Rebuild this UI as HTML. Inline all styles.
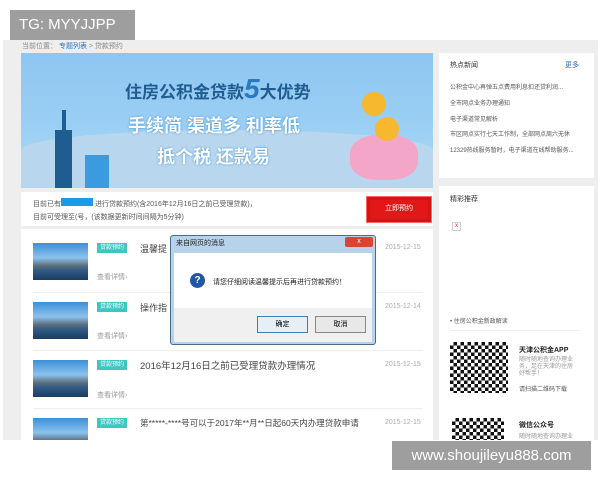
<!DOCTYPE html>
<html><head><meta charset="utf-8"><style>
*{margin:0;padding:0;box-sizing:border-box}
body{width:600px;height:480px;background:#fff;font-family:"Liberation Sans","Noto Sans CJK SC",sans-serif;position:relative;overflow:hidden}
.a{position:absolute}
.page{left:3px;top:40px;width:595px;height:400px;background:#eeeeee}
.w{background:#fff}
.t{font-size:7px;color:#555;white-space:nowrap}
.thumb{width:55px;height:37px;background:linear-gradient(#3d8fd8 0,#8cc2ec 40%,#5a6c7a 62%,#2f5a86 75%,#1b3c60 100%)}
.tag{background:#3cc7c0;color:#fff;font-size:6px;padding:1px 3px;height:10px;line-height:8px}
.qr{background:repeating-conic-gradient(#111 0 25%,#fff 0 50%) 0 0/7px 7px}
</style></head><body>
<div class="a page"></div>
<div class="a" style="left:10px;top:10px;width:125px;height:30px;background:#9e9e9e;color:#fff;font-size:15px;line-height:30px;padding-left:9px">TG: MYYJJPP</div>
<div class="a t" style="left:22px;top:41px;color:#888">当前位置： <span style="color:#2a6fc0">专题列表</span> &gt; 贷款预约</div>
<div class="a" style="left:21px;top:53px;width:412px;height:135px;background:linear-gradient(#8ec6f2,#9cd0f4 60%,#b9dcf4)"></div>
<div class="a" style="left:21px;top:130px;width:412px;height:58px;background:#b8d7ee;border-radius:50% 50% 0 0/20px 20px 0 0"></div>
<div class="a" style="left:55px;top:130px;width:17px;height:58px;background:#1f5d90"></div>
<div class="a" style="left:62px;top:110px;width:4px;height:22px;background:#1f5d90"></div>
<div class="a" style="left:85px;top:155px;width:24px;height:33px;background:#3a9be0"></div>
<div class="a" style="left:125px;top:73px;font-size:17px;color:#1f5d90;font-weight:bold;white-space:nowrap">住房公积金贷款<span style="font-size:28px;color:#2a7ac0;font-style:italic">5</span>大优势</div>
<div class="a" style="left:128px;top:112px;font-size:18px;color:#fff;font-weight:bold;white-space:nowrap;text-shadow:0 0 2px #3a8ad0">手续简 渠道多 利率低</div>
<div class="a" style="left:157px;top:143px;font-size:18px;color:#fff;font-weight:bold;white-space:nowrap;text-shadow:0 0 2px #3a8ad0">抵个税 还款易</div>
<div class="a" style="left:350px;top:135px;width:68px;height:45px;background:#f4a6c8;border-radius:40%"></div>
<div class="a" style="left:362px;top:92px;width:24px;height:24px;background:#f5b82e;border-radius:50%"></div>
<div class="a" style="left:375px;top:117px;width:24px;height:24px;background:#f5b82e;border-radius:50%"></div>

<div class="a w" style="left:21px;top:192px;width:412px;height:34px"></div>
<div class="a t" style="left:33px;top:198px">目前已有<span style="background:#1a9be8;display:inline-block;width:32px;height:8px"></span> 进行贷款预约(含2016年12月16日之前已受理贷款)，</div>
<div class="a t" style="left:33px;top:212px">目前可受理至(号，(该数据更新时间间隔为5分钟)</div>
<div class="a" style="left:367px;top:197px;width:64px;height:25px;background:#e21818;border:3px solid #d61212;outline:1px solid #f66;color:#fff;font-size:7px;text-align:center;line-height:18px">立即预约</div>

<div class="a w" style="left:21px;top:229px;width:412px;height:211px"></div>
<div class="a thumb" style="left:33px;top:243px"></div>
<div class="a thumb" style="left:33px;top:302px"></div>
<div class="a thumb" style="left:33px;top:360px"></div>
<div class="a thumb" style="left:33px;top:418px"></div>
<div class="a tag" style="left:97px;top:243px">贷款预约</div>
<div class="a tag" style="left:97px;top:302px">贷款预约</div>
<div class="a tag" style="left:97px;top:360px">贷款预约</div>
<div class="a tag" style="left:97px;top:418px">贷款预约</div>
<div class="a" style="left:140px;top:242px;font-size:9px;color:#444">温馨提</div>
<div class="a" style="left:140px;top:301px;font-size:9px;color:#444">操作指</div>
<div class="a" style="left:140px;top:358px;font-size:9.5px;color:#444;white-space:nowrap">2016年12月16日之前已受理贷款办理情况</div>
<div class="a" style="left:140px;top:417px;font-size:8.5px;color:#444;white-space:nowrap">第*****-****号可以于2017年**月**日起60天内办理贷款申请</div>
<div class="a t" style="left:97px;top:272px;color:#999">查看详情›</div>
<div class="a t" style="left:97px;top:331px;color:#999">查看详情›</div>
<div class="a t" style="left:97px;top:390px;color:#999">查看详情›</div>
<div class="a t" style="left:385px;top:244px;color:#aaa">2015-12-15</div>
<div class="a t" style="left:385px;top:303px;color:#aaa">2015-12-14</div>
<div class="a t" style="left:385px;top:361px;color:#aaa">2015-12-15</div>
<div class="a t" style="left:385px;top:419px;color:#aaa">2015-12-15</div>
<div class="a" style="left:33px;top:292px;width:390px;height:1px;background:#eee"></div>
<div class="a" style="left:33px;top:350px;width:390px;height:1px;background:#eee"></div>
<div class="a" style="left:33px;top:408px;width:390px;height:1px;background:#eee"></div>

<div class="a" style="left:170px;top:235px;width:206px;height:110px;background:#b7d3ec;border:1px solid #4a6a8a;border-radius:3px"></div>
<div class="a t" style="left:176px;top:238px;color:#222">来自网页的消息</div>
<div class="a" style="left:345px;top:237px;width:28px;height:10px;background:#d9452f;border-radius:2px;color:#fff;font-size:7px;text-align:center;line-height:9px">x</div>
<div class="a" style="left:174px;top:253px;width:198px;height:55px;background:#fff"></div>
<div class="a" style="left:174px;top:308px;width:198px;height:34px;background:#f0f0f0"></div>
<div class="a" style="left:190px;top:273px;width:15px;height:15px;border-radius:50%;background:#2456a8;color:#fff;font-size:10px;font-weight:bold;text-align:center;line-height:15px">?</div>
<div class="a t" style="left:213px;top:277px;color:#222">请您仔细阅读温馨提示后再进行贷款预约！</div>
<div class="a" style="left:257px;top:316px;width:51px;height:17px;background:#e6eef6;border:1px solid #3c7fb1;font-size:7px;text-align:center;line-height:15px">确定</div>
<div class="a" style="left:315px;top:316px;width:51px;height:17px;background:#e8e8e8;border:1px solid #888;font-size:7px;text-align:center;line-height:15px">取消</div>

<div class="a w" style="left:439px;top:53px;width:155px;height:125px"></div>
<div class="a t" style="left:450px;top:60px;color:#333">热点新闻</div>
<div class="a t" style="left:565px;top:60px;color:#2a6fc0">更多</div>
<div class="a t" style="left:450px;top:82px;font-size:6px">公积金中心再弹五点费用利息扣还贷利润...</div>
<div class="a t" style="left:450px;top:98px;font-size:6px">全市网点业务办理通知</div>
<div class="a t" style="left:450px;top:114px;font-size:6px">电子渠道常见解析</div>
<div class="a t" style="left:450px;top:129px;font-size:6px">市区网点实行七天工作制，全部网点周六无休</div>
<div class="a t" style="left:450px;top:145px;font-size:6px">12329热线服务暂时，电子渠道在线帮助服务...</div>
<div class="a w" style="left:439px;top:186px;width:155px;height:254px"></div>
<div class="a t" style="left:450px;top:194px;color:#333">精彩推荐</div>
<div class="a" style="left:452px;top:222px;width:9px;height:9px;border:1px solid #ccc;color:#d22;font-size:6px;line-height:7px;text-align:center">x</div>
<div class="a t" style="left:450px;top:316px;font-size:6px">• 住房公积金新政解读</div>
<div class="a" style="left:450px;top:330px;width:130px;height:1px;background:#eee"></div>
<div class="a qr" style="left:450px;top:342px;width:58px;height:51px"></div>
<div class="a qr" style="left:452px;top:418px;width:52px;height:22px"></div>
<div class="a t" style="left:519px;top:345px;color:#222;font-weight:bold">天津公积金APP</div>
<div class="a t" style="left:519px;top:357px;font-size:6px;color:#999;line-height:7px">随时随地查询办理业<br>务，足在天津的住房<br>好帮手！</div>
<div class="a t" style="left:519px;top:384px;font-size:6px">请扫描二维码下载</div>
<div class="a t" style="left:519px;top:420px;color:#222;font-weight:bold">微信公众号</div>
<div class="a t" style="left:519px;top:431px;font-size:6px;color:#999">随时随地查询办理业</div>

<div class="a" style="left:0;top:440px;width:600px;height:40px;background:#fff"></div>
<div class="a" style="left:392px;top:441px;width:199px;height:29px;background:#9e9e9e;color:#fff;font-size:15px;line-height:29px;text-align:center">www.shoujileyu888.com</div>
</body></html>
